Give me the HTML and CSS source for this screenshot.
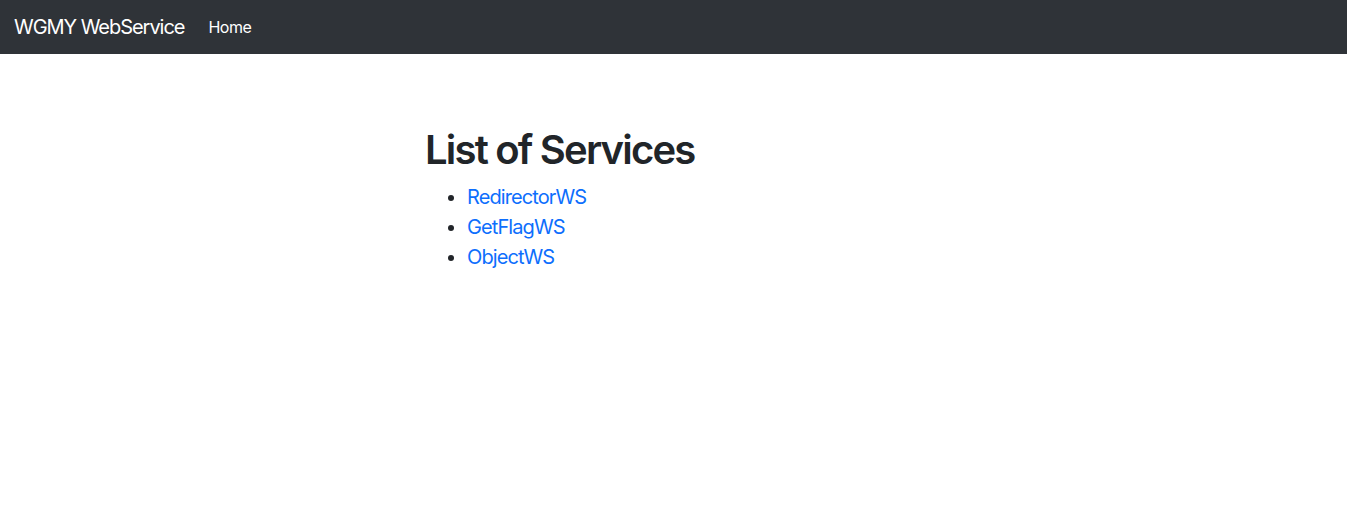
FILE: index.html
```html
<!DOCTYPE html>
<html lang="en">
<head>
<meta charset="utf-8">
<title>WGMY WebService</title>
<link rel="stylesheet" href="styles.css">
</head>
<body>
<nav class="navbar">
  <a class="brand" href="#">WGMY WebService</a>
  <a class="nav-link" href="#">Home</a>
</nav>
<main class="content">
  <h1 class="title">List of Services</h1>
  <ul class="services">
    <li><a href="#">RedirectorWS</a></li>
    <li><a href="#">GetFlagWS</a></li>
    <li><a href="#">ObjectWS</a></li>
  </ul>
</main>
</body>
</html>
```

FILE: styles.css
```css
* { box-sizing: border-box; }
html, body { margin: 0; padding: 0; }
body {
  font-family: Inter, "Noto Sans", "Liberation Sans", sans-serif;
  color: #212529;
  background: #fff;
  font-size: 16px;
  line-height: 1.5;
}
.navbar {
  height: 54px;
  background: #2f3338;
  display: flex;
  align-items: center;
  padding: 0 14px;
}
.brand {
  color: #fff;
  text-decoration: none;
  font-size: 20px;
  letter-spacing: -0.052em;
  margin-right: 24px;
}
.nav-link {
  color: #fff;
  text-decoration: none;
  font-size: 16px;
  letter-spacing: -0.03em;
}
.content {
  padding: 72px 0 0 425px;
}
.title {
  margin: 0 0 8px;
  font-size: 40px;
  font-weight: 600;
  letter-spacing: -0.045em;
  line-height: 1.2;
}
.services {
  margin: 0;
  padding-left: 42px;
  font-size: 20px;
  line-height: 30px;
}
.services a {
  color: #0d6efd;
  text-decoration: none;
  letter-spacing: -0.045em;
}
```
